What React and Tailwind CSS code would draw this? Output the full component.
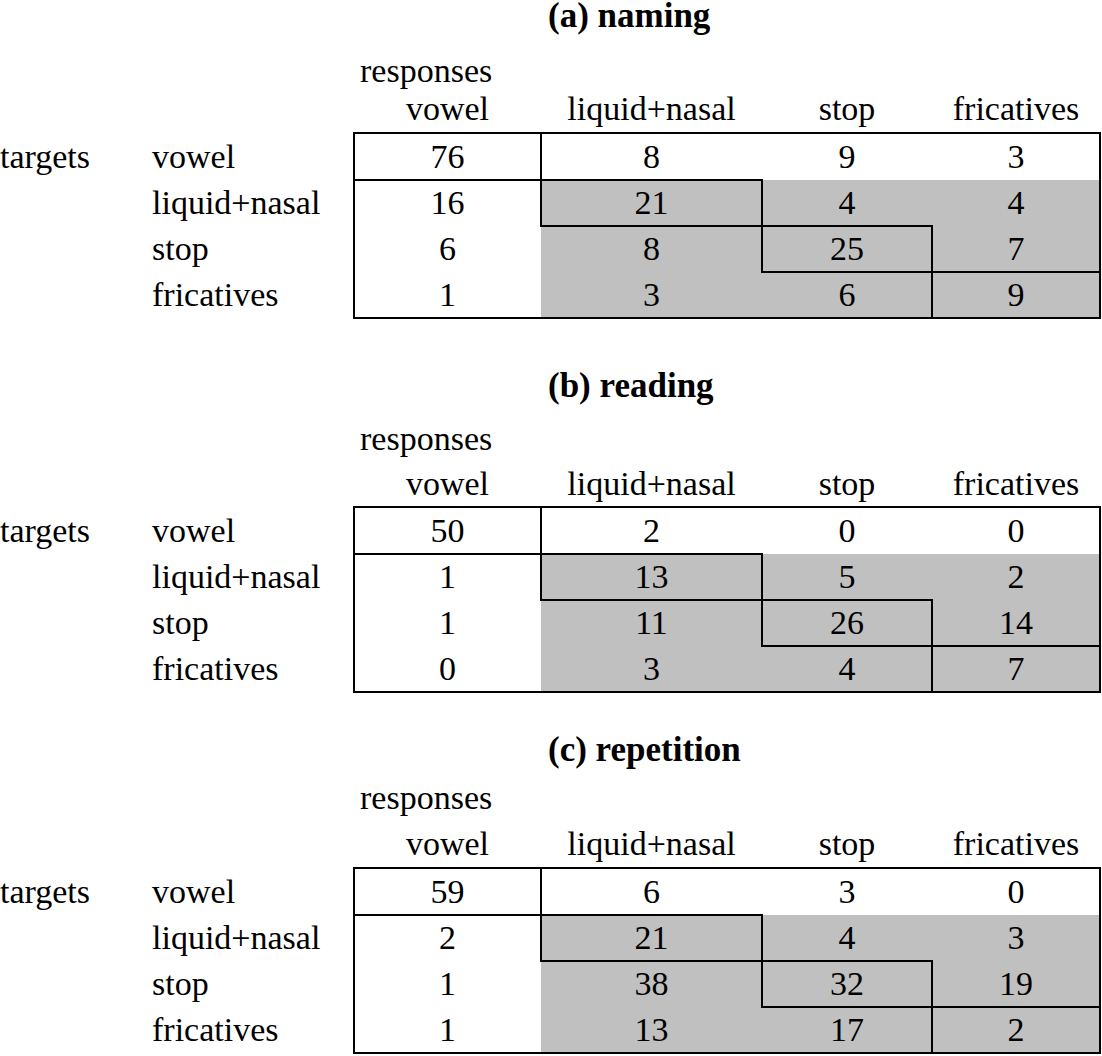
const columns = ['vowel', 'liquid+nasal', 'stop', 'fricatives']
const colWidths = ['w-[187px]', 'w-[221px]', 'w-[170px]', 'w-[168px]']
const rowHeights = ['h-[47px] leading-[47px]', 'h-[46px] leading-[46px]', 'h-[46px] leading-[46px]', 'h-[46px] leading-[46px]']

const sections = [
  {
    id: 'a',
    title: '(a) naming',
    spacing: { section: 'pt-[2px]', resp: 'mt-[22px]', head: 'mt-0', table: 'mt-[5px]' },
    rows: [
      [76, 8, 9, 3],
      [16, 21, 4, 4],
      [6, 8, 25, 7],
      [1, 3, 6, 9],
    ],
  },
  {
    id: 'b',
    title: '(b) reading',
    spacing: { section: 'pt-[54px]', resp: 'mt-[20px]', head: 'mt-[7px]', table: 'mt-[4px]' },
    rows: [
      [50, 2, 0, 0],
      [1, 13, 5, 2],
      [1, 11, 26, 14],
      [0, 3, 4, 7],
    ],
  },
  {
    id: 'c',
    title: '(c) repetition',
    spacing: { section: 'pt-[44px]', resp: 'mt-[15px]', head: 'mt-[8px]', table: 'mt-[5px]' },
    rows: [
      [59, 6, 3, 0],
      [2, 21, 4, 3],
      [1, 38, 32, 19],
      [1, 13, 17, 2],
    ],
  },
]

function cellClass(r, c) {
  const shaded = r > 0 && c > 0
  const diagonal = r === c
  return [
    colWidths[c],
    rowHeights[r],
    'text-center',
    shaded ? 'bg-[#c0c0c0]' : '',
    diagonal ? 'relative z-10 outline-2 outline-black -outline-offset-1' : '',
  ].join(' ')
}

function ConfusionTable({ section }) {
  const { title, spacing, rows } = section

  return (
    <section className={spacing.section}>
      <h2 className="pl-[548px] text-[35px] font-bold leading-[28px]">{title}</h2>
      <div className={`pl-[360px] leading-[38px] ${spacing.resp}`}>responses</div>
      <div className={`flex pl-[354px] leading-[38px] ${spacing.head}`}>
        {columns.map((label, c) => (
          <div key={label} className={`${colWidths[c]} text-center`}>
            {label}
          </div>
        ))}
      </div>

      <div className={`flex ${spacing.table}`}>
        <div className="w-[354px] shrink-0">
          {columns.map((label, r) => (
            <div key={label} className={`flex ${rowHeights[r]}`}>
              <div className="w-[152px] shrink-0">{r === 0 ? 'targets' : ''}</div>
              <div>{label}</div>
            </div>
          ))}
        </div>

        <div className="relative w-[746px] shrink-0 outline-2 outline-black -outline-offset-1">
          {rows.map((row, r) => (
            <div key={r} className="flex">
              {row.map((value, c) => (
                <div key={c} className={cellClass(r, c)}>
                  {value}
                </div>
              ))}
            </div>
          ))}
        </div>
      </div>
    </section>
  )
}

export default function App() {
  return (
    <div
      className="h-[1056px] w-[1102px] overflow-hidden bg-white text-[34px] text-black"
      style={{ fontFamily: '"Liberation Serif", "Times New Roman", serif' }}
    >
      {sections.map((section) => (
        <ConfusionTable key={section.id} section={section} />
      ))}
    </div>
  )
}
